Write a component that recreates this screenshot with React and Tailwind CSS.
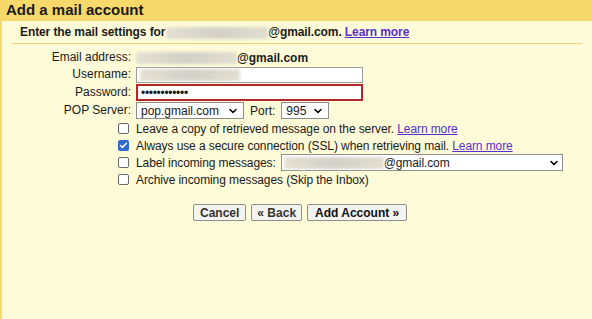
import { ChevronDown, Check } from 'lucide-react';

function Blur({ w }) {
  return (
    <span
      className="inline-block h-[12px] align-middle bg-gradient-to-r from-[#e4e1d2] via-[#d2d0c8] to-[#e2dfd0] blur-[1.5px]"
      style={{ width: w }}
    />
  );
}

function Select({ children, className }) {
  return (
    <div className={`flex items-center justify-between h-[17px] border border-[#8d8d8d] bg-white px-[4px] text-[12px] ${className}`}>
      <span className="flex items-center">{children}</span>
      <ChevronDown size={12} strokeWidth={3} className="text-black" />
    </div>
  );
}

function Box({ checked }) {
  return checked ? (
    <span className="flex items-center justify-center w-[11px] h-[11px] rounded-[2px] bg-[#2f6ad0]">
      <Check size={9} strokeWidth={4} className="text-white" />
    </span>
  ) : (
    <span className="block w-[11px] h-[11px] rounded-[2px] border border-[#6a6a6a] bg-white" />
  );
}

function Link({ children }) {
  return <span className="text-[#5a2fd0] underline underline-offset-1">{children}</span>;
}

export default function App() {
  return (
    <div className="w-[592px] h-[319px] bg-[#fefbd8] text-[#1a1a1a] font-['Liberation_Sans',Arial,sans-serif] overflow-hidden">
      <div className="h-[21px] bg-[#f7d86a] pl-[6px] flex items-center">
        <span className="text-[15px] font-bold">Add a mail account</span>
      </div>
      <div className="flex h-[298px]">
        <div className="w-[2px] bg-[#f7d86a]" />
        <div className="flex-1">
          <div className="mx-[10px] h-[23px] border-b border-[#f0d27a] pl-[8px] flex items-center text-[12px] font-bold tracking-[-0.1px]">
            Enter the mail settings for <span className="ml-[1px]"><Blur w={102} /></span>@gmail.com.&nbsp;<Link>Learn more</Link>
          </div>

          <div className="grid grid-cols-[129px_1fr] gap-x-[5px] text-[12px] mt-[5px] items-center">
            <div className="text-right h-[17px] leading-[17px]">Email address:</div>
            <div className="flex items-center h-[17px] font-bold"><Blur w={101} />@gmail.com</div>

            <div className="text-right h-[17px] leading-[17px]">Username:</div>
            <div className="h-[17px] flex items-center">
              <div className="w-[227px] h-[16px] border border-[#9a9a9a] bg-white flex items-center px-[3px]"><Blur w={100} /></div>
            </div>

            <div className="text-right h-[19px] leading-[19px]">Password:</div>
            <div className="h-[19px] flex items-center">
              <div className="w-[227px] h-[17px] border-2 border-[#b3262b] bg-white flex items-center px-[3px] text-[12px] leading-none tracking-[-0.3px]">••••••••••••</div>
            </div>

            <div className="text-right h-[17px] leading-[17px]">POP Server:</div>
            <div className="flex items-center gap-[6px] h-[17px]">
              <Select className="w-[108px]">pop.gmail.com</Select>
              <span>Port:</span>
              <Select className="w-[48px]">995</Select>
            </div>
          </div>

          <div className="ml-[116px] mt-[1px] flex flex-col text-[12px] tracking-[-0.1px]">
            <div className="flex items-center gap-[7px] h-[17px]">
              <Box /> <span>Leave a copy of retrieved message on the server. <Link>Learn more</Link></span>
            </div>
            <div className="flex items-center gap-[7px] h-[17px]">
              <Box checked /> <span>Always use a secure connection (SSL) when retrieving mail. <Link>Learn more</Link></span>
            </div>
            <div className="flex items-center gap-[7px] h-[17px]">
              <Box /> <span>Label incoming messages:</span>
              <Select className="w-[282px] !px-[2px] -ml-[2px]"><Blur w={100} />@gmail.com</Select>
            </div>
            <div className="flex items-center gap-[7px] h-[17px]">
              <Box /> <span>Archive incoming messages (Skip the Inbox)</span>
            </div>
          </div>

          <div className="flex gap-[5px] ml-[191px] mt-[16px] text-[12px]">
            <button className="h-[17px] px-[6px] border border-[#8d8d8d] bg-[#f3f3f0] rounded-[2px] font-bold text-[#333] leading-none">Cancel</button>
            <button className="h-[17px] px-[5px] border border-[#8d8d8d] bg-[#f3f3f0] rounded-[2px] font-bold text-[#333] leading-none">« Back</button>
            <button className="h-[17px] px-[7px] border border-[#8d8d8d] bg-[#f3f3f0] rounded-[2px] font-bold text-[#111] leading-none">Add Account »</button>
          </div>
        </div>
      </div>
    </div>
  );
}
